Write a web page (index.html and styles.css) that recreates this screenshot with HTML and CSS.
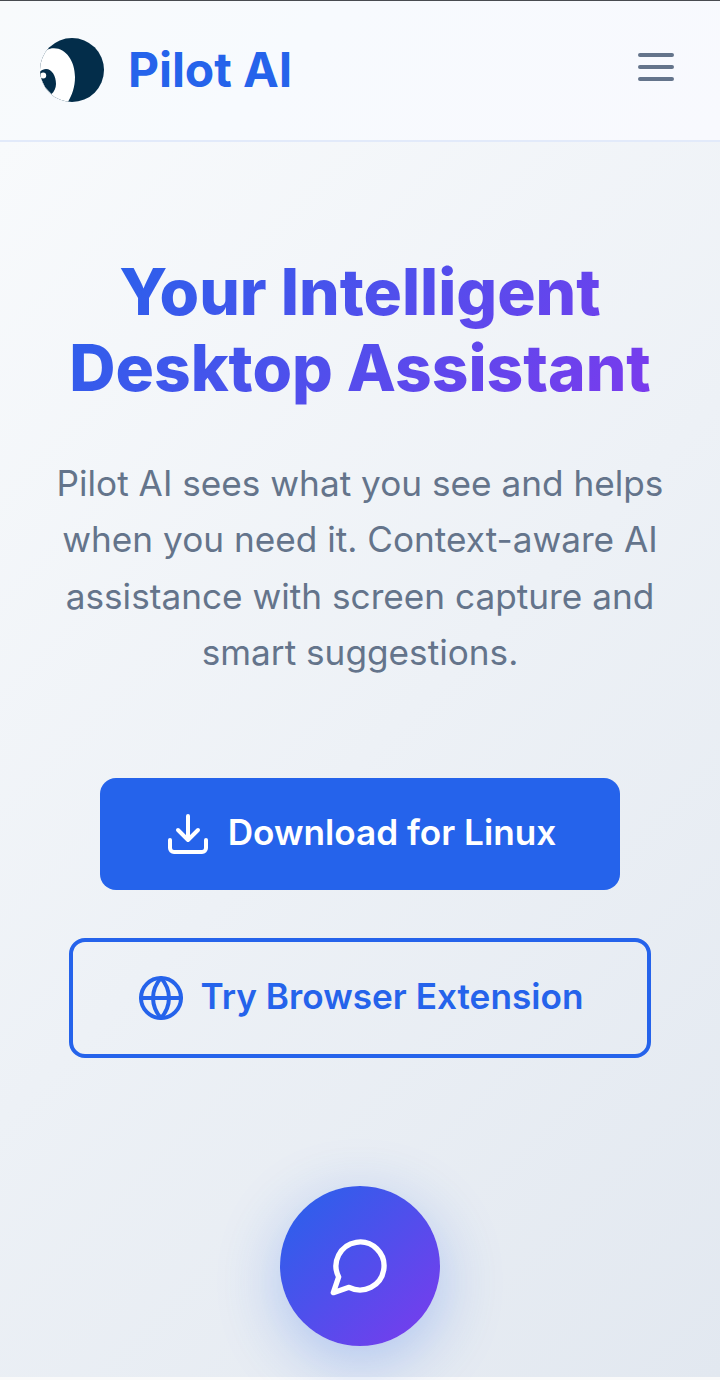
FILE: index.html
```html
<!DOCTYPE html>
<html lang="en">
<head>
<meta charset="utf-8">
<title>Pilot AI</title>
<link rel="stylesheet" href="styles.css">
</head>
<body>
<div class="page">
  <header class="header">
    <a class="brand">
      <svg class="logo" viewBox="0 0 64 64">
        <defs><clipPath id="disc"><circle cx="32" cy="32" r="32"/></clipPath></defs>
        <g clip-path="url(#disc)">
          <rect width="64" height="64" fill="#032d4a"/>
          <path d="M0 0L6.5 12.2C9 10.7 11 10.2 14 10.2C26 10.2 35 23 35 39C35 49 32 57 28 64H0Z" fill="#fff"/>
          <path d="M-2 36C0 33 3 31 6 31C12 31 16 38 16 46C16 50 14 54 11.5 56L5 49L0 38Z" fill="#032d4a"/>
          <circle cx="3.2" cy="37.4" r="3" fill="#fff"/>
        </g>
      </svg>
      <span class="name">Pilot AI</span>
    </a>
    <svg class="menu" viewBox="0 0 48 48"><path d="M8 12h32M8 24h32M8 36h32"/></svg>
  </header>
  <main class="hero">
    <h1 class="title">Your Intelligent<br>Desktop Assistant</h1>
    <p class="lead">Pilot AI sees what you see and helps<br>when you need it. Context-aware AI<br>assistance with screen capture and<br>smart suggestions.</p>
    <div class="actions">
      <a class="button primary"><svg class="icon" viewBox="0 0 24 24"><path d="M21 15v4a2 2 0 0 1-2 2H5a2 2 0 0 1-2-2v-4M7 10l5 5 5-5M12 15V3"/></svg><span class="label">Download for Linux</span></a>
      <a class="button outline"><svg class="icon" viewBox="0 0 24 24"><circle cx="12" cy="12" r="10"/><path d="M2 12h20M12 2a15.3 15.3 0 0 1 4 10 15.3 15.3 0 0 1-4 10 15.3 15.3 0 0 1-4-10 15.3 15.3 0 0 1 4-10z"/></svg><span class="label">Try Browser Extension</span></a>
    </div>
    <div class="chat"><svg class="bubble" viewBox="0 0 24 24"><path d="M7.9 20A9 9 0 1 0 4 16.1L2 22Z"/></svg></div>
  </main>
</div>
</body>
</html>
```
FILE: styles.css
```css
* { box-sizing: border-box; }
body { margin: 0; font-family: Inter, "Liberation Sans", sans-serif; background: #fafafa; }
.page { height: 1380px; overflow: hidden; }
.header { height: 142px; padding: 0 40px 2px; display: flex; align-items: center; justify-content: space-between; border-top: 1px solid #484b50; border-bottom: 2px solid #e2eafa; background: linear-gradient(135deg, #f8fafc, #f7fafe 40%, #f8f9fe); }
.brand { display: flex; align-items: center; gap: 24px; }
.logo { width: 64px; height: 64px; }
.name { font-size: 48px; font-weight: 700; letter-spacing: -0.1px; color: #2563eb; line-height: 64px; }
.menu { width: 48px; height: 48px; margin-bottom: 6px; fill: none; stroke: #64748b; stroke-width: 4; stroke-linecap: round; }
.hero { height: 1235px; padding-top: 112px; display: flex; flex-direction: column; align-items: center; text-align: center; background: linear-gradient(135deg, #f8fafc, #e2e8f0); }
.title { margin: 0; font-size: 64px; line-height: 76.3px; font-weight: 800; background: linear-gradient(135deg, #2563eb, #7c3aed); -webkit-background-clip: text; background-clip: text; color: transparent; }
.lead { margin: 48.3px 0 0; font-size: 35.2px; line-height: 56.32px; color: #64748b; }
.actions { margin-top: 97.6px; display: flex; flex-direction: column; align-items: center; gap: 48px; }
.button { display: flex; align-items: center; justify-content: center; gap: 16px; border-radius: 16px; font-size: 35.2px; font-weight: 600; }
.primary { width: 520px; height: 112px; background: #2563eb; color: #fff; }
.outline { width: 582px; height: 120px; border: 4px solid #2563eb; color: #2563eb; }
.icon { width: 48px; height: 48px; fill: none; stroke: currentColor; stroke-width: 2; stroke-linecap: round; stroke-linejoin: round; }
.label { margin-bottom: 3px; }
.chat { flex: none; width: 160px; height: 160px; margin-top: 128px; border-radius: 50%; display: flex; align-items: center; justify-content: center; background: linear-gradient(135deg, #2563eb, #7c3aed); box-shadow: 0 16px 64px rgba(37, 99, 235, .3); }
.bubble { width: 64px; height: 64px; fill: none; stroke: #fff; stroke-width: 2; stroke-linecap: round; stroke-linejoin: round; }
```
